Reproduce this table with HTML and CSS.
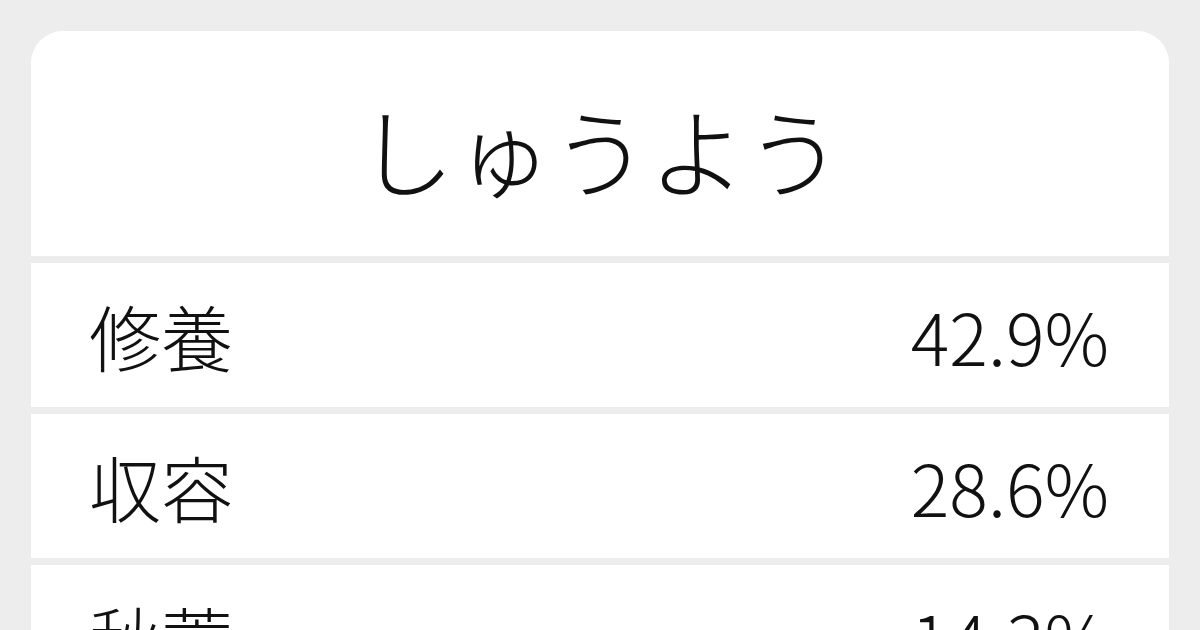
FILE: index.html
```html
<!DOCTYPE html>
<html lang="ja">
<head>
  <meta charset="UTF-8">
  <meta name="viewport" content="width=device-width, initial-scale=1.0">
  <title>しゅうよう</title>
  <link rel="stylesheet" href="styles.css">
</head>
<body>
  <div class="card">
    <div class="heading">
      <h1>しゅうよう</h1>
    </div>
    <div class="row">
      <span class="word">修養</span>
      <span class="rate">42.9%</span>
    </div>
    <div class="row">
      <span class="word">収容</span>
      <span class="rate">28.6%</span>
    </div>
    <div class="row">
      <span class="word">秋蓑</span>
      <span class="rate">14.3%</span>
    </div>
  </div>
</body>
</html>
```

FILE: styles.css
```css
body {
  font-family: "Noto Sans CJK JP", "Noto Sans", sans-serif;
  font-weight: 300;
  background-color: #ededed;
  color: #111;
  margin: 0;
  padding: 31px;
  height: 630px;
  box-sizing: border-box;
  overflow: hidden;
}

.card {
  display: flex;
  flex-direction: column;
  gap: 7px;
  border-radius: 32px 32px 0 0;
  overflow: hidden;
}

.heading {
  background-color: #fff;
  height: 225px;
  display: flex;
  align-items: center;
  justify-content: center;
  padding-top: 8px;
  box-sizing: border-box;
}

h1 {
  margin: 0;
  font-size: 97px;
  font-weight: 300;
  line-height: 1;
}

.row {
  background-color: #fff;
  height: 144px;
  flex-shrink: 0;
  display: flex;
  align-items: center;
  justify-content: space-between;
  padding: 0 60px 0 58px;
  font-size: 72px;
  line-height: 1;
}
```
